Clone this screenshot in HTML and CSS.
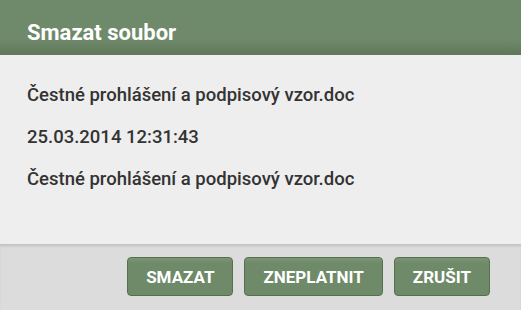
FILE: index.html
```html
<!DOCTYPE html>
<html lang="cs">
<head>
    <meta charset="UTF-8">
    <title>Smazat soubor</title>
    <link rel="stylesheet" href="styles.css">
</head>
<body>
    <div class="dialog">
        <div class="dialog-header">Smazat soubor</div>
        <div class="dialog-body">
            <p>Čestné prohlášení a podpisový vzor.doc</p>
            <p>25.03.2014 12:31:43</p>
            <p>Čestné prohlášení a podpisový vzor.doc</p>
        </div>
        <div class="dialog-footer">
            <button class="btn">SMAZAT</button>
            <button class="btn">ZNEPLATNIT</button>
            <button class="btn">ZRUŠIT</button>
        </div>
    </div>
</body>
</html>
```

FILE: styles.css
```css
:root {
    --green: #6e8a69;
    --green-dark: #5f7a5a;
    --body-bg: #eeeeee;
    --footer-bg: #dcdcdc;
    --text: #333;
}

* {
    box-sizing: border-box;
    margin: 0;
    padding: 0;
}

body {
    font-family: Roboto, "Liberation Sans", sans-serif;
    width: 521px;
    height: 310px;
    overflow: hidden;
}

.dialog {
    display: flex;
    flex-direction: column;
    height: 310px;
}

.dialog-header {
    height: 55px;
    background: linear-gradient(to bottom, #6f8a6a 0%, #6f8a6a 72%, #5f7759 100%);
    color: #fff;
    font-size: 22px;
    line-height: 26px;
    font-weight: 700;
    padding: 20px 27px 0;
}

.dialog-body {
    height: 189px;
    background: var(--body-bg);
    padding: 29px 27px 0;
    color: var(--text);
    font-size: 18.5px;
    line-height: 22px;
    font-weight: 500;
}

.dialog-body p {
    margin-bottom: 20px;
}

.dialog-footer {
    flex: 1;
    background: var(--footer-bg);
    box-shadow: inset 0 3px 3px -1px rgba(0, 0, 0, 0.12);
    display: flex;
    justify-content: flex-end;
    align-items: flex-start;
    gap: 11px;
    padding: 13px 31px 0 0;
}

.btn {
    height: 39px;
    padding: 0 18px;
    background: linear-gradient(to bottom, #7a9474 0%, #6e8a69 15%, #6e8a69 100%);
    border: 1px solid #56704f;
    border-radius: 4px;
    color: #fff;
    font-family: inherit;
    font-size: 17px;
    font-weight: 700;
}
```
